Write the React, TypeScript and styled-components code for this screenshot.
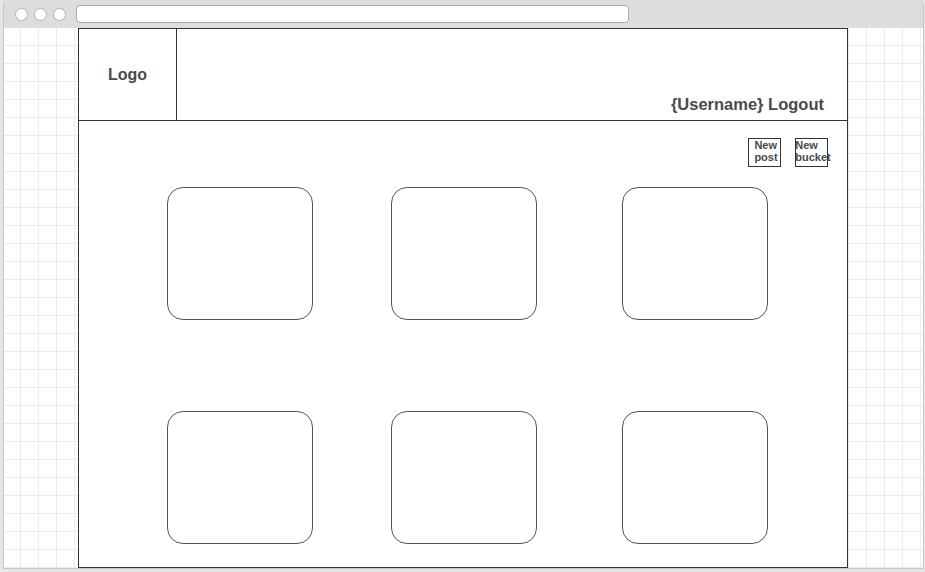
import React from 'react';
import styled, { createGlobalStyle } from 'styled-components';

const GlobalStyle = createGlobalStyle`
  * {
    box-sizing: border-box;
  }
  body {
    margin: 0;
    background: #e6e6e6;
    font-family: "Liberation Sans", Arial, sans-serif;
  }
`;

const Page = styled.div`
  width: 925px;
  height: 572px;
  padding-left: 3px;
  overflow: hidden;
`;

const Window = styled.div`
  width: 921px;
  height: 569px;
  display: flex;
  flex-direction: column;
  background: #dddddd;
  border: 1px solid #c6c6c6;
  border-top: none;
  border-radius: 5px 5px 0 0;
`;

const TitleBar = styled.div`
  height: 28px;
  display: flex;
  align-items: center;
  padding-left: 11px;
  gap: 6px;
`;

const Dot = styled.span`
  width: 13px;
  height: 13px;
  border-radius: 50%;
  background: #fff;
  border: 1px solid #b3b3b3;
`;

const AddressBar = styled.div`
  width: 553px;
  height: 18px;
  margin-left: 4px;
  background: #fff;
  border: 1px solid #acacac;
  border-radius: 4px;
`;

const Canvas = styled.div`
  flex: 1;
  padding-left: 74px;
  background-color: #fff;
  background-image:
    linear-gradient(to right, transparent 17px, #ececec 17px),
    linear-gradient(to bottom, transparent 17px, #ececec 17px);
  background-size: 18px 18px;
  background-position: -1px 0;
`;

const Frame = styled.div`
  width: 770px;
  height: 540px;
  display: flex;
  flex-direction: column;
  background: #fff;
  border: 1px solid #333;
`;

const Header = styled.header`
  height: 92px;
  display: flex;
  border-bottom: 1px solid #333;
`;

const LogoCell = styled.div`
  width: 98px;
  display: flex;
  align-items: center;
  justify-content: center;
  border-right: 1px solid #333;
  font-size: 16px;
  font-weight: bold;
  color: #4a4a4a;
`;

const UserCell = styled.div`
  flex: 1;
  display: flex;
  align-items: flex-end;
  justify-content: flex-end;
  padding: 0 23px 7px 0;
  font-size: 16.5px;
  line-height: 18px;
  font-weight: bold;
  color: #4a4a4a;
`;

const Body = styled.main`
  flex: 1;
  padding: 17px 19px 0 88px;
`;

const Toolbar = styled.div`
  display: flex;
  justify-content: flex-end;
  gap: 14px;
`;

const SmallButton = styled.div`
  width: 33px;
  height: 29px;
  display: flex;
  justify-content: center;
  padding-left: 3px;
  border: 1px solid #333;
  font-size: 11px;
  line-height: 12px;
  font-weight: bold;
  color: #4a4a4a;
`;

const ButtonLabel = styled.span`
  white-space: nowrap;
  text-align: left;
`;

const CardGrid = styled.div`
  margin-top: 20px;
  display: grid;
  grid-template-columns: 146px 146px 146px;
  grid-auto-rows: 133px;
  column-gap: 78px;
  row-gap: 91px;
`;

const Card = styled.div<{ $shift?: number }>`
  width: 146px;
  border: 1px solid #555;
  border-radius: 16px;
  margin-left: ${(p) => p.$shift ?? 0}px;
`;

export default function App() {
  const cards = [1, 2, 3, 4, 5, 6];

  return (
    <>
      <GlobalStyle />
      <Page>
        <Window>
          <TitleBar>
            <Dot />
            <Dot />
            <Dot />
            <AddressBar />
          </TitleBar>
          <Canvas>
            <Frame>
              <Header>
                <LogoCell>Logo</LogoCell>
                <UserCell>{'{Username}'} Logout</UserCell>
              </Header>
              <Body>
                <Toolbar>
                  <SmallButton>
                    <ButtonLabel>
                      New
                      <br />
                      post
                    </ButtonLabel>
                  </SmallButton>
                  <SmallButton>
                    <ButtonLabel>
                      New
                      <br />
                      bucket
                    </ButtonLabel>
                  </SmallButton>
                </Toolbar>
                <CardGrid>
                  {cards.map((c) => (
                    <Card key={c} $shift={c % 3 === 0 ? 7 : 0} />
                  ))}
                </CardGrid>
              </Body>
            </Frame>
          </Canvas>
        </Window>
      </Page>
    </>
  );
}
